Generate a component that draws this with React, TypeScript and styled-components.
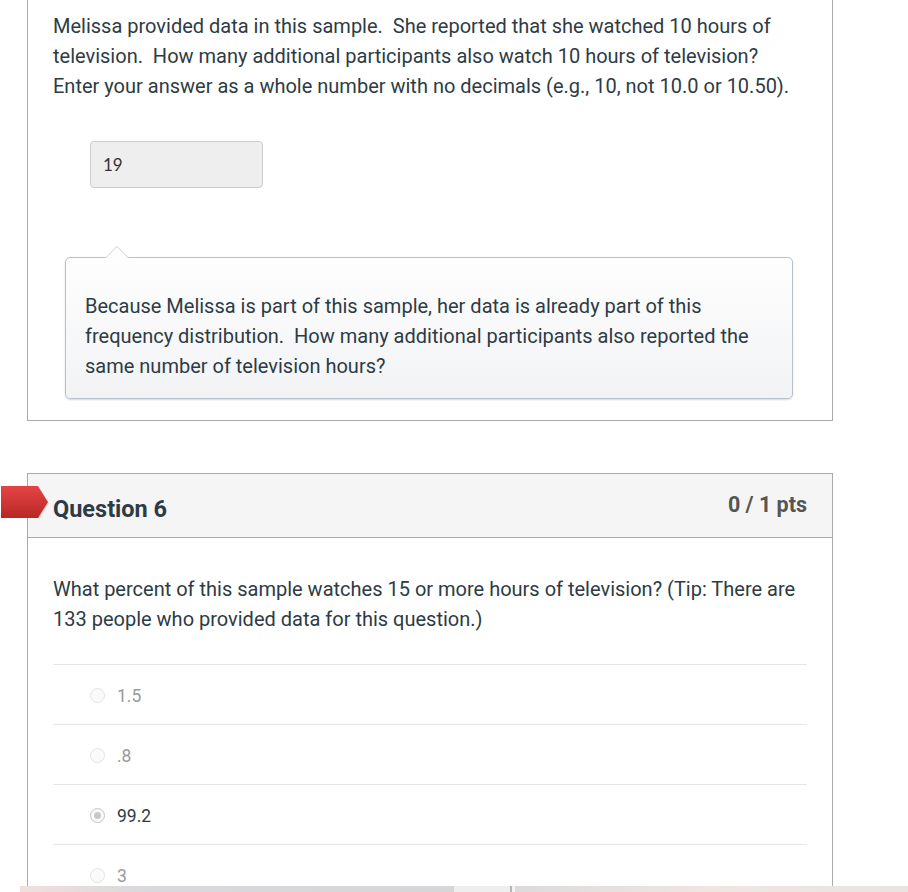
import React from 'react';
import styled, { createGlobalStyle } from 'styled-components';

const GlobalStyle = createGlobalStyle`
  html, body {
    margin: 0;
    padding: 0;
    background: #fff;
    overflow: hidden;
  }
  body {
    font-family: Roboto, "Liberation Sans", Arial, sans-serif;
    color: #2d3b45;
  }
`;

const Page = styled.div`
  width: 908px;
  height: 892px;
  overflow: hidden;
  position: relative;
  padding-left: 27px;
  box-sizing: border-box;
`;

const Card = styled.div<{ $cut?: boolean }>`
  width: 806px;
  box-sizing: border-box;
  border: 1px solid #aaaaaa;
  background: #fff;
  position: relative;
  ${(p) => (p.$cut ? 'border-top: none; margin-top: -20px;' : '')}
`;

const Body = styled.div<{ $top: number }>`
  padding: ${(p) => p.$top}px 25px 21px 25px;
`;

const Text = styled.p`
  margin: 0;
  font-size: 20px;
  line-height: 30px;
`;

const AnswerBox = styled.div`
  margin: 40px 0 0 37px;
  width: 173px;
  height: 47px;
  box-sizing: border-box;
  background: #eeeeee;
  border: 1px solid #cccccc;
  border-radius: 4px;
  padding: 0 12px;
  display: flex;
  align-items: center;
  font-family: Lato, "Liberation Sans", sans-serif;
  font-size: 17px;
  color: #333;
`;

const Tip = styled.div`
  position: relative;
  margin: 69px 14px 0 12px;
  padding: 33px 19px 17px 19px;
  border: 1px solid #b9c2ca;
  border-radius: 5px;
  background: linear-gradient(#fefefe, #f2f3f5);
  box-shadow: 0 1px 2px rgba(0, 0, 0, 0.15);

  &::before,
  &::after {
    content: '';
    position: absolute;
    left: 39px;
    width: 0;
    height: 0;
    border-left: 12px solid transparent;
    border-right: 12px solid transparent;
  }
  &::before {
    top: -12px;
    border-bottom: 12px solid #c9d0d6;
  }
  &::after {
    top: -11px;
    border-bottom: 12px solid #fefefe;
  }
`;

const Gap = styled.div`
  height: 52px;
`;

const Header = styled.div`
  height: 64px;
  box-sizing: border-box;
  background: #f5f5f5;
  border-bottom: 1px solid #aaaaaa;
  display: flex;
  align-items: center;
  justify-content: space-between;
  padding: 2px 25px 0 25px;
`;

const Title = styled.h2`
  margin: 0;
  font-size: 23.5px;
  font-weight: 700;
  color: #2d3b45;
  padding-top: 5px;
`;

const Points = styled.span`
  font-size: 21.5px;
  font-weight: 700;
  color: #555;
  margin-bottom: 5px;
`;

const Flag = styled.svg`
  position: absolute;
  left: -27px;
  top: 11px;
`;

const Answers = styled.div`
  margin-top: 30px;
`;

const Answer = styled.label`
  display: flex;
  align-items: center;
  height: 60px;
  border-top: 1px solid #e6e6e6;
  padding: 2px 0 0 37px;
  box-sizing: border-box;
`;

const Radio = styled.span<{ $on?: boolean }>`
  width: 13px;
  height: 13px;
  border-radius: 50%;
  border: 1px solid #e3e3e3;
  background: #fafafa;
  margin-right: 12px;
  position: relative;
  ${(p) =>
    p.$on
      ? `border-color: #c4c4c4;
  &::after {
    content: '';
    position: absolute;
    left: 3px;
    top: 3px;
    width: 7px;
    height: 7px;
    border-radius: 50%;
    background: #c8c8c8;
  }`
      : ''}
`;

const AnswerText = styled.span<{ $on?: boolean }>`
  font-size: 17.5px;
  color: ${(p) => (p.$on ? '#2d3b45' : '#9a9a9a')};
`;

const BottomStrip = styled.div`
  position: absolute;
  left: 20px;
  right: 0;
  bottom: 0;
  height: 6px;
  display: flex;
`;

const StripPart = styled.div<{ $w: string; $bg: string }>`
  width: ${(p) => p.$w};
  background: ${(p) => p.$bg};
`;

const answers = [
  { label: '1.5' },
  { label: '.8' },
  { label: '99.2', on: true },
  { label: '3' },
];

export default function App() {
  return (
    <Page>
      <GlobalStyle />
      <Card $cut>
        <Body $top={31}>
          <Text>
            Melissa provided data in this sample.&nbsp; She reported that she watched 10 hours of
            television.&nbsp; How many additional participants also watch 10 hours of television?
            Enter your answer as a whole number with no decimals (e.g., 10, not 10.0 or 10.50).
          </Text>
          <AnswerBox>19</AnswerBox>
          <Tip>
            <Text>
              Because Melissa is part of this sample, her data is already part of this frequency
              distribution.&nbsp; How many additional participants also reported the same number
              of television hours?
            </Text>
          </Tip>
        </Body>
      </Card>
      <Gap />
      <Card>
        <Flag width="50" height="36" viewBox="0 0 50 36">
          <defs>
            <linearGradient id="flagGrad" x1="0" y1="0" x2="0" y2="1">
              <stop offset="0" stopColor="#e44544" />
              <stop offset="1" stopColor="#b82826" />
            </linearGradient>
          </defs>
          <path d="M0 1 H37 L47 17 L37 33 H0 Z" fill="url(#flagGrad)" />
          <path d="M37 33 L47 17 L48 18 L38 34 Z" fill="rgba(0,0,0,0.15)" />
        </Flag>
        <Header>
          <Title>Question 6</Title>
          <Points>0 / 1 pts</Points>
        </Header>
        <Body $top={36}>
          <Text>
            What percent of this sample watches 15 or more hours of television? (Tip: There are
            133 people who provided data for this question.)
          </Text>
          <Answers>
            {answers.map((a) => (
              <Answer key={a.label}>
                <Radio $on={a.on} />
                <AnswerText $on={a.on}>{a.label}</AnswerText>
              </Answer>
            ))}
          </Answers>
        </Body>
      </Card>
      <BottomStrip>
        <StripPart $w="434px" $bg="linear-gradient(90deg, #efe0dc, #d9d8dc 30%, #d6d6d9)" />
        <StripPart $w="56px" $bg="#eeeeee" />
        <StripPart $w="2px" $bg="#b5b5b5" />
        <StripPart $w="3px" $bg="#f3f3f3" />
        <StripPart $w="393px" $bg="linear-gradient(90deg, #dedadc, #efe6e0 50%, #eae3e0)" />
      </BottomStrip>
    </Page>
  );
}
